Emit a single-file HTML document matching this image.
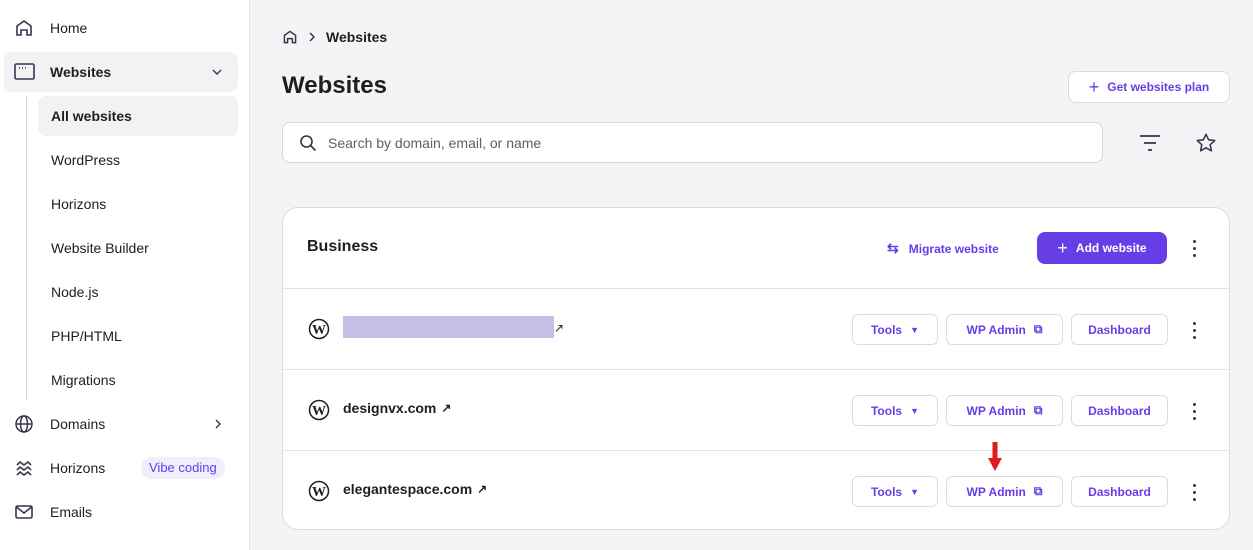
<!DOCTYPE html>
<html><head><style>
*{box-sizing:border-box;margin:0;padding:0}
body{width:1253px;height:550px;overflow:hidden;font-family:"Liberation Sans",sans-serif;background:#f4f4f6;color:#1d1e20;position:relative}
.sb{position:absolute;left:0;top:0;width:250px;height:550px;background:#fff;border-right:1px solid #e3e3e8}
.it{position:absolute;left:50px;font-size:14px;line-height:20px}
.sub{position:absolute;left:51px;font-size:14px;line-height:20px}
.ic{position:absolute;left:14px}
.main{position:absolute;left:251px;top:0;right:0;bottom:0}
.btn{position:absolute;height:31px;border:1px solid #dadce0;border-radius:6px;background:#fff;color:#673de6;font-weight:bold;font-size:12px;display:flex;align-items:center;justify-content:center;gap:8px}
.row{position:absolute;left:0;right:0;height:81px;border-top:1px solid #e3e3e8}
.dom{position:absolute;left:60px;top:30px;font-size:14px;font-weight:bold;display:flex;align-items:center;gap:5px}
.kb{position:absolute;left:910px;width:4px}
.kb i{display:block;width:3px;height:3px;background:#36344d;border-radius:50%;margin-bottom:4px}
</style></head><body>
<div class="sb">
<svg class="ic" style="top:18px" width="20" height="20" viewBox="0 0 20 20" fill="none" stroke="#36344d" stroke-width="1.6"><path d="M3 17V8l7-5 7 5v9h-4v-5H7v5z"/></svg>
<div class="it" style="top:18px">Home</div>
<div style="position:absolute;left:4px;top:52px;width:234px;height:40px;background:#f2f2f4;border-radius:8px"></div>
<svg class="ic" style="top:62px" width="22" height="20" viewBox="0 0 22 20" fill="none" stroke="#36344d" stroke-width="1.6"><rect x="1" y="2" width="19" height="15" rx="1.5"/><path d="M5 6h1M8 6h1M11 6h1"/></svg>
<div class="it" style="top:62px;font-weight:bold">Websites</div>
<svg style="position:absolute;left:212px;top:68px" width="10" height="8" viewBox="0 0 10 8" fill="none" stroke="#36344d" stroke-width="1.4"><path d="M1 2l4 4 4-4"/></svg>
<div style="position:absolute;left:26px;top:96px;width:1px;height:304px;background:#d8d8dc"></div>
<div style="position:absolute;left:38px;top:96px;width:200px;height:40px;background:#f2f2f4;border-radius:8px"></div>
<div class="sub" style="top:106px;font-weight:bold">All websites</div>
<div class="sub" style="top:150px">WordPress</div>
<div class="sub" style="top:194px">Horizons</div>
<div class="sub" style="top:238px">Website Builder</div>
<div class="sub" style="top:282px">Node.js</div>
<div class="sub" style="top:326px">PHP/HTML</div>
<div class="sub" style="top:370px">Migrations</div>
<svg class="ic" style="top:414px" width="20" height="20" viewBox="0 0 20 20" fill="none" stroke="#36344d" stroke-width="1.5"><circle cx="10" cy="10" r="8"/><ellipse cx="10" cy="10" rx="3.5" ry="8"/><path d="M2 10h16"/></svg>
<div class="it" style="top:414px">Domains</div>
<svg style="position:absolute;left:214px;top:419px" width="8" height="10" viewBox="0 0 8 10" fill="none" stroke="#36344d" stroke-width="1.4"><path d="M2 1l4 4-4 4"/></svg>
<svg class="ic" style="top:458px" width="20" height="20" viewBox="0 0 20 20" fill="none" stroke="#36344d" stroke-width="1.6"><path d="M3 7l3-3 4 3 4-3 3 3M3 12l3-3 4 3 4-3 3 3M3 17l3-3 4 3 4-3 3 3"/></svg>
<div class="it" style="top:458px">Horizons</div>
<div style="position:absolute;left:141px;top:457px;padding:0 8px;height:22px;line-height:22px;border-radius:11px;background:#f0edfc;color:#673de6;font-size:13px">Vibe coding</div>
<svg class="ic" style="top:502px" width="20" height="20" viewBox="0 0 20 20" fill="none" stroke="#36344d" stroke-width="1.6"><rect x="2" y="4" width="16" height="12" rx="1.5"/><path d="M2.5 5l7.5 6 7.5-6"/></svg>
<div class="it" style="top:502px">Emails</div>
</div>
<div class="main">
<svg style="position:absolute;left:31px;top:29px" width="16" height="16" viewBox="0 0 20 20" fill="none" stroke="#36344d" stroke-width="1.8"><path d="M3 17V8l7-5 7 5v9h-4v-5H7v5z"/></svg>
<svg style="position:absolute;left:57px;top:32px" width="8" height="10" viewBox="0 0 8 10" fill="none" stroke="#36344d" stroke-width="1.5"><path d="M2 1l4 4-4 4"/></svg>
<div style="position:absolute;left:75px;top:29px;font-size:14px;font-weight:bold">Websites</div>
<div style="position:absolute;left:31px;top:72px;font-size:24px;font-weight:bold">Websites</div>
<div class="btn" style="left:817px;top:71px;width:162px;height:32px;border-radius:8px"><span style="font-size:18px;font-weight:normal">+</span>Get websites plan</div>
<div style="position:absolute;left:31px;top:122px;width:821px;height:41px;background:#fff;border:1px solid #d8d8dc;border-radius:8px"></div>
<svg style="position:absolute;left:48px;top:134px" width="18" height="18" viewBox="0 0 18 18" fill="none" stroke="#36344d" stroke-width="1.6"><circle cx="7.5" cy="7.5" r="5.5"/><path d="M11.5 11.5l5 5"/></svg>
<div style="position:absolute;left:77px;top:135px;font-size:14px;color:#5e5e66">Search by domain, email, or name</div>
<svg style="position:absolute;left:888px;top:133px" width="22" height="20" viewBox="0 0 22 20" fill="none" stroke="#36344d" stroke-width="1.7"><path d="M1 3h20M5 10h12M9 17h4"/></svg>
<svg style="position:absolute;left:944px;top:132px" width="22" height="22" viewBox="0 0 24 24" fill="none" stroke="#36344d" stroke-width="1.7" stroke-linejoin="round"><path d="M12 2.5l2.9 6 6.6.8-4.9 4.6 1.3 6.6L12 17.2l-5.9 3.3 1.3-6.6-4.9-4.6 6.6-.8z"/></svg>
<div style="position:absolute;left:31px;top:207px;width:948px;height:323px;background:#fff;border:1px solid #dadce0;border-radius:16px;overflow:hidden">
<div style="position:absolute;left:24px;top:30px;font-size:16px;font-weight:bold">Business</div>
<div style="position:absolute;left:604px;top:32px;color:#673de6;font-size:12px;font-weight:bold;display:flex;gap:10px;align-items:center"><span style="font-size:14px">⇆</span>Migrate website</div>
<div style="position:absolute;left:754px;top:24px;width:130px;height:32px;background:#673de6;border-radius:8px;color:#fff;font-size:12px;font-weight:bold;display:flex;align-items:center;justify-content:center;gap:8px"><span style="font-size:18px;font-weight:normal">+</span>Add website</div>
<div class="kb" style="top:32px"><i></i><i></i><i></i></div>

<div class="row" style="top:80px">
<svg style="position:absolute;left:25px;top:29px" width="22" height="22" viewBox="0 0 22 22"><circle cx="11" cy="11" r="9.5" fill="none" stroke="#1d1e20" stroke-width="1.5"/><text x="11" y="16" font-size="14" font-family="Liberation Serif" font-weight="bold" text-anchor="middle" fill="#1d1e20">W</text></svg>
<div style="position:absolute;left:60px;top:27px;width:211px;height:22px;background:#c5bfe6"></div>
<span style="position:absolute;left:271px;top:32px;font-size:12px">↗</span>
<div class="btn" style="left:569px;top:25px;width:86px">Tools <span style="font-size:9px">▼</span></div>
<div class="btn" style="left:663px;top:25px;width:117px">WP Admin <span>⧉</span></div>
<div class="btn" style="left:788px;top:25px;width:97px">Dashboard</div>
<div class="kb" style="top:33px"><i></i><i></i><i></i></div>
</div>
<div class="row" style="top:161px">
<svg style="position:absolute;left:25px;top:29px" width="22" height="22" viewBox="0 0 22 22"><circle cx="11" cy="11" r="9.5" fill="none" stroke="#1d1e20" stroke-width="1.5"/><text x="11" y="16" font-size="14" font-family="Liberation Serif" font-weight="bold" text-anchor="middle" fill="#1d1e20">W</text></svg>
<div class="dom">designvx.com <span style="font-size:12px">↗</span></div>
<div class="btn" style="left:569px;top:25px;width:86px">Tools <span style="font-size:9px">▼</span></div>
<div class="btn" style="left:663px;top:25px;width:117px">WP Admin <span>⧉</span></div>
<div class="btn" style="left:788px;top:25px;width:97px">Dashboard</div>
<div class="kb" style="top:33px"><i></i><i></i><i></i></div>
</div>
<div class="row" style="top:242px">
<svg style="position:absolute;left:25px;top:29px" width="22" height="22" viewBox="0 0 22 22"><circle cx="11" cy="11" r="9.5" fill="none" stroke="#1d1e20" stroke-width="1.5"/><text x="11" y="16" font-size="14" font-family="Liberation Serif" font-weight="bold" text-anchor="middle" fill="#1d1e20">W</text></svg>
<div class="dom">elegantespace.com <span style="font-size:12px">↗</span></div>
<div class="btn" style="left:569px;top:25px;width:86px">Tools <span style="font-size:9px">▼</span></div>
<div class="btn" style="left:663px;top:25px;width:117px">WP Admin <span>⧉</span></div>
<div class="btn" style="left:788px;top:25px;width:97px">Dashboard</div>
<div class="kb" style="top:33px"><i></i><i></i><i></i></div>
<svg style="position:absolute;left:705px;top:-9px" width="14" height="30" viewBox="0 0 14 30"><rect x="4.5" y="0" width="5" height="18" fill="#e01b1b"/><path d="M0 16h14L7 29z" fill="#e01b1b"/></svg>
</div>
</div>
</div>
</body></html>
